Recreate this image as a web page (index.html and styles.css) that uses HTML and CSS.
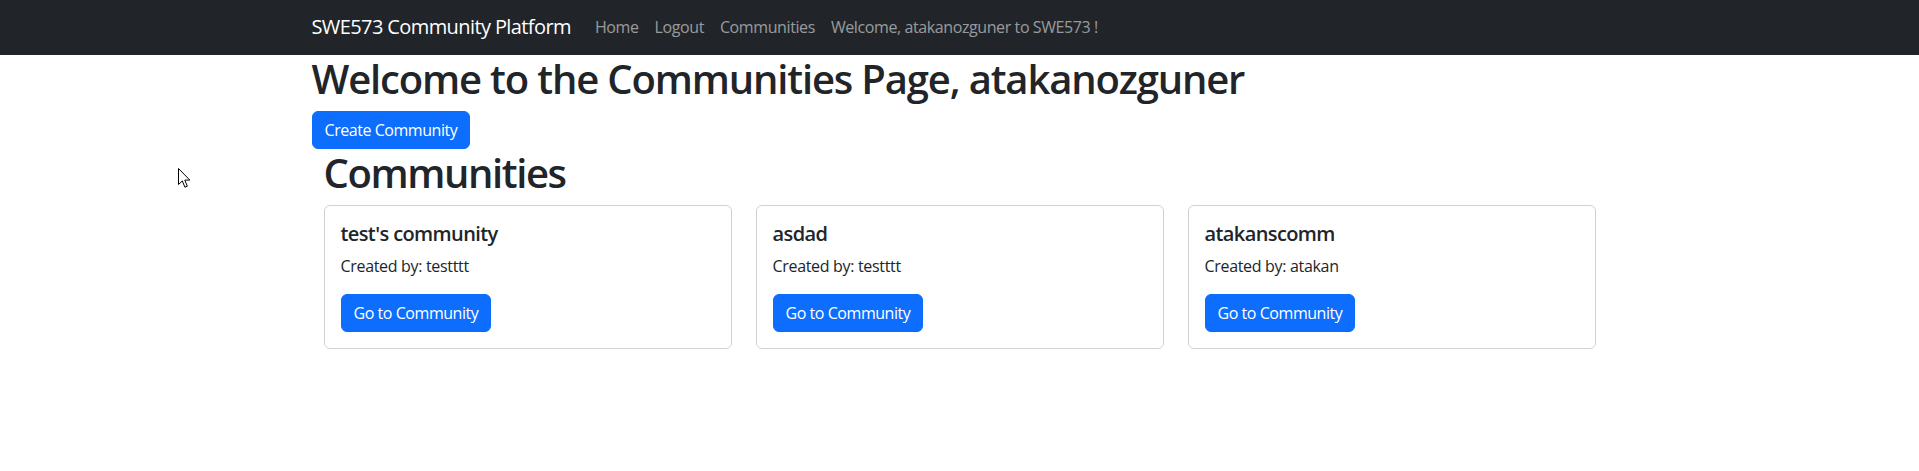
FILE: index.html
```html
<!DOCTYPE html>
<html lang="en">
<head>
<meta charset="utf-8">
<title>SWE573 Community Platform</title>
<link rel="stylesheet" href="styles.css">
</head>
<body>
<nav class="navbar">
  <div class="container nav-inner">
    <a class="brand" href="#">SWE573 Community Platform</a>
    <ul class="nav-list">
      <li><a class="nav-link" href="#">Home</a></li>
      <li><a class="nav-link" href="#">Logout</a></li>
      <li><a class="nav-link" href="#">Communities</a></li>
      <li><span class="nav-link">Welcome, atakanozguner to SWE573 !</span></li>
    </ul>
  </div>
</nav>
<main class="container">
  <h1 class="page-title">Welcome to the Communities Page, atakanozguner</h1>
  <a class="btn" href="#">Create Community</a>
  <section class="container inner">
    <h1 class="page-title section-title">Communities</h1>
    <div class="card-grid">
      <div class="card">
        <h5 class="card-title">test's community</h5>
        <p class="card-text">Created by: testttt</p>
        <a class="btn" href="#">Go to Community</a>
      </div>
      <div class="card">
        <h5 class="card-title">asdad</h5>
        <p class="card-text">Created by: testttt</p>
        <a class="btn" href="#">Go to Community</a>
      </div>
      <div class="card">
        <h5 class="card-title">atakanscomm</h5>
        <p class="card-text">Created by: atakan</p>
        <a class="btn" href="#">Go to Community</a>
      </div>
    </div>
  </section>
</main>
<svg class="cursor" width="13" height="21" viewBox="0 0 13 21" aria-hidden="true">
  <path d="M0.5 0.5 L0.5 16.5 L4.3 12.9 L6.9 19.2 L9.3 18.2 L6.8 12.1 L11.8 12.1 Z" fill="#fff" stroke="#000" stroke-width="1" stroke-linejoin="miter"/>
</svg>
</body>
</html>
```
FILE: styles.css
```css
* { box-sizing: border-box; }
html, body { margin: 0; padding: 0; }
body {
  font-family: "Open Sans", "Liberation Sans", sans-serif;
  font-size: 16px;
  line-height: 1.5;
  color: #212529;
  background: #fff;
  letter-spacing: -0.02em;
}
.container {
  width: 100%;
  max-width: 1320px;
  margin: 0 auto;
  padding: 0 12px;
}
.navbar {
  background: #212529;
  padding: 7px 0 8px;
}
.nav-inner {
  display: flex;
  align-items: center;
}
.brand {
  font-size: 20px;
  line-height: 30px;
  padding: 5px 0;
  margin-right: 16px;
  color: #fff;
  text-decoration: none;
  letter-spacing: -0.03em;
}
.nav-list {
  display: flex;
  list-style: none;
  margin: 0;
  padding: 0;
}
.nav-link {
  display: block;
  padding: 8px;
  color: rgba(255, 255, 255, 0.55);
  text-decoration: none;
  line-height: 24px;
  letter-spacing: -0.025em;
}
.page-title {
  font-size: 40px;
  line-height: 48px;
  font-weight: 600;
  margin: 0 0 8px;
  letter-spacing: -0.029em;
}
.section-title {
  letter-spacing: -0.035em;
}
.btn {
  display: inline-block;
  padding: 6px 12px;
  border: 1px solid #0d6efd;
  border-radius: 6px;
  background: #0d6efd;
  color: #fff;
  font-size: 16px;
  line-height: 24px;
  text-decoration: none;
  letter-spacing: -0.028em;
}
.inner {
  padding: 0 12px;
}
.card-grid {
  display: grid;
  grid-template-columns: repeat(3, 1fr);
  gap: 24px;
  margin-top: 1px;
}
.card {
  border: 1px solid rgba(0, 0, 0, 0.175);
  border-radius: 6px;
  padding: 16px;
}
.card-title {
  font-size: 20px;
  line-height: 24px;
  font-weight: 600;
  margin: 0 0 8px;
  letter-spacing: -0.03em;
}
.card-text {
  margin: 0 0 16px;
}
.cursor {
  position: absolute;
  left: 178px;
  top: 168px;
}
```
